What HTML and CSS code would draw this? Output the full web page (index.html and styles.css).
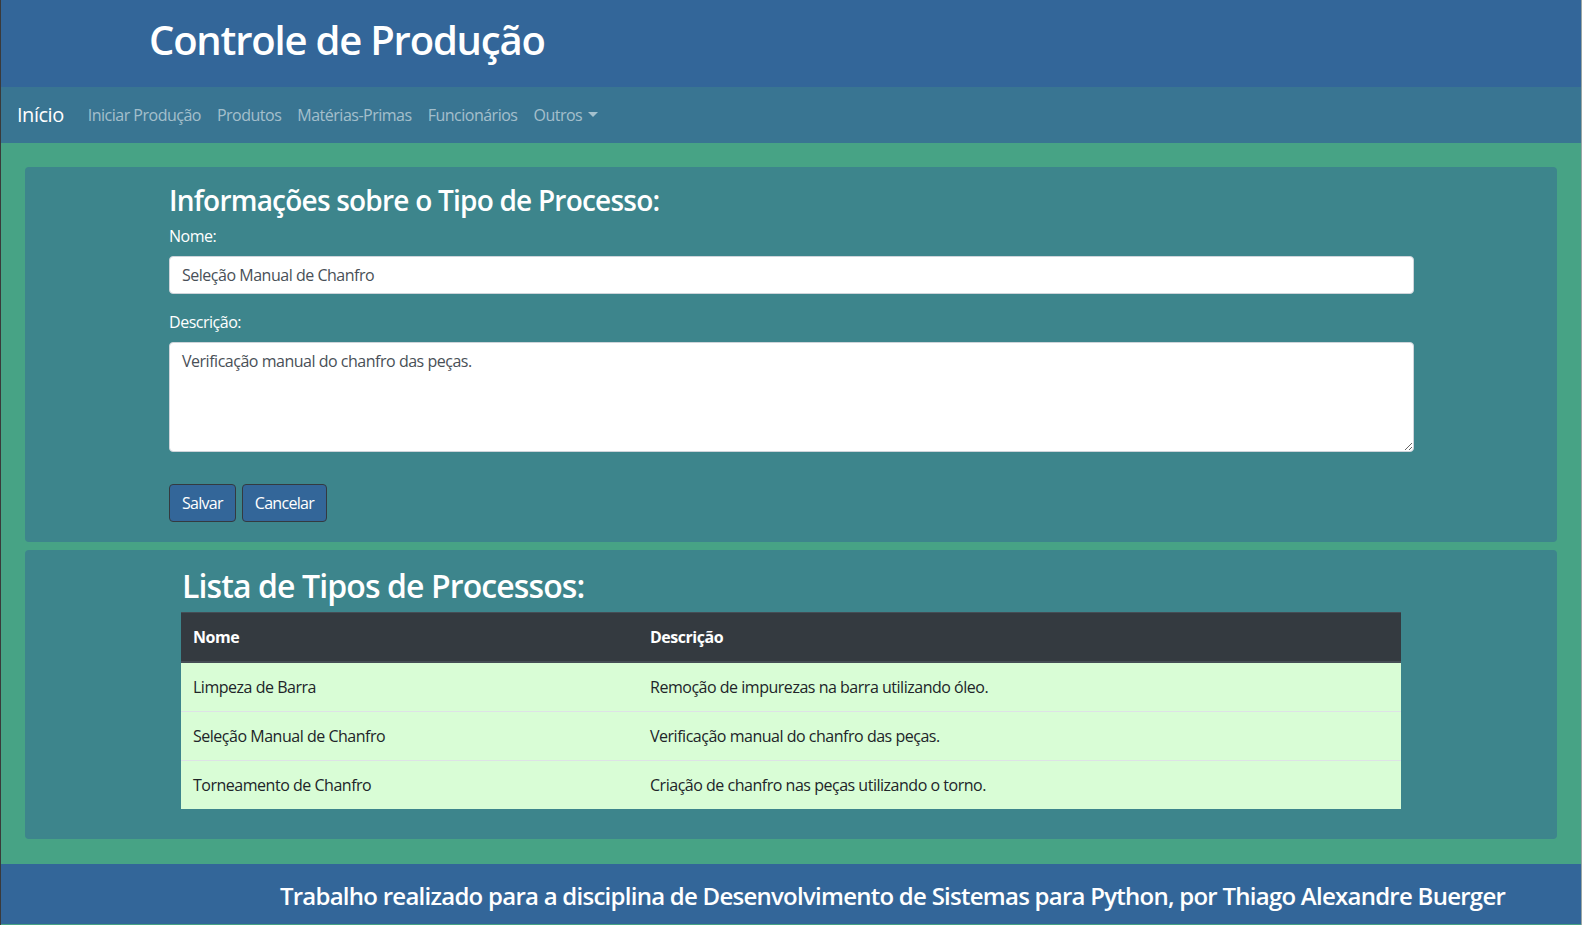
FILE: index.html
```html
<!DOCTYPE html>
<html lang="pt-BR">
<head>
<meta charset="utf-8">
<title>Controle de Produção</title>
<link rel="stylesheet" href="styles.css">
</head>
<body>
<header class="site-header">
  <h1 class="site-title">Controle de Produção</h1>
</header>
<nav class="navbar">
  <a class="brand" href="#">Início</a>
  <ul class="nav-links">
    <li><a href="#">Iniciar Produção</a></li>
    <li><a href="#">Produtos</a></li>
    <li><a href="#">Matérias-Primas</a></li>
    <li><a href="#">Funcionários</a></li>
    <li><a href="#" class="dropdown">Outros<span class="caret"></span></a></li>
  </ul>
</nav>
<main class="content">
  <section class="card card-form">
    <form class="form-col">
      <h3 class="form-title">Informações sobre o Tipo de Processo:</h3>
      <div class="form-group">
        <label for="nome">Nome:</label>
        <input id="nome" class="form-control" type="text" value="Seleção Manual de Chanfro">
      </div>
      <div class="form-group">
        <label for="descricao">Descrição:</label>
        <textarea id="descricao" class="form-control textarea" rows="4">Verificação manual do chanfro das peças.</textarea>
      </div>
      <div class="actions">
        <button type="button" class="btn">Salvar</button>
        <button type="button" class="btn">Cancelar</button>
      </div>
    </form>
  </section>
  <section class="card card-list">
    <div class="list-col">
      <h2 class="list-title">Lista de Tipos de Processos:</h2>
      <table class="table">
        <thead>
          <tr><th class="col-name">Nome</th><th>Descrição</th></tr>
        </thead>
        <tbody>
          <tr><td>Limpeza de Barra</td><td>Remoção de impurezas na barra utilizando óleo.</td></tr>
          <tr><td>Seleção Manual de Chanfro</td><td>Verificação manual do chanfro das peças.</td></tr>
          <tr><td>Torneamento de Chanfro</td><td>Criação de chanfro nas peças utilizando o torno.</td></tr>
        </tbody>
      </table>
    </div>
  </section>
</main>
<footer class="site-footer">
  <h4 class="footer-text">Trabalho realizado para a disciplina de Desenvolvimento de Sistemas para Python, por Thiago Alexandre Buerger</h4>
</footer>
</body>
</html>
```

FILE: styles.css
```css
* { box-sizing: border-box; }

html, body { height: 100%; }

body {
  margin: 0;
  font-family: "Open Sans", "Noto Sans", sans-serif;
  font-size: 16px;
  line-height: 1.5;
  color: #212529;
  background: #47a385;
  border-left: 1px solid #3a3a3a;
  border-right: 1px solid #9aa6a6;
  letter-spacing: -0.03em;
}

.site-header {
  background: #336699;
  height: 87px;
  padding: 16px 0 0 148px;
}

.site-title {
  margin: 0;
  color: #fff;
  font-size: 40px;
  font-weight: 600;
  line-height: 1.2;
  letter-spacing: -0.03em;
}

.navbar {
  background: #397592;
  height: 56px;
  padding: 8px 16px;
  display: flex;
  align-items: center;
}

.brand {
  color: #fff;
  text-decoration: none;
  font-size: 20px;
  line-height: 30px;
  padding: 5px 0;
  margin-right: 16px;
}

.nav-links {
  list-style: none;
  margin: 0;
  padding: 0;
  display: flex;
}

.nav-links a {
  display: block;
  padding: 8px;
  color: rgba(255, 255, 255, 0.55);
  text-decoration: none;
  line-height: 24px;
  letter-spacing: -0.031em;
}

.caret {
  display: inline-block;
  margin-left: 6px;
  vertical-align: 4px;
  border-top: 5px solid rgba(255, 255, 255, 0.55);
  border-left: 5px solid transparent;
  border-right: 5px solid transparent;
}

.content {
  padding: 24px 24px 25px;
  display: flex;
  flex-direction: column;
  gap: 8px;
}

.card {
  background: #3d858c;
  border-radius: 4px;
}

.card-form {
  padding: 15px 143px 20px 144px;
}

.form-title {
  margin: 0 0 6px;
  padding-top: 2px;
  color: #fff;
  font-size: 28px;
  font-weight: 600;
  line-height: 1.2;
  letter-spacing: -0.028em;
}

.form-group {
  margin-bottom: 16px;
}

.form-group label {
  display: block;
  color: #fff;
  margin-bottom: 8px;
}

.form-control {
  display: block;
  width: 100%;
  height: 38px;
  padding: 6px 12px;
  font-family: inherit;
  font-size: 16px;
  line-height: 1.5;
  letter-spacing: inherit;
  color: #495057;
  background: #fff;
  border: 1px solid #ced4da;
  border-radius: 4px;
}

.textarea {
  height: 110px;
  resize: vertical;
}

.actions {
  padding-top: 16px;
  display: flex;
  gap: 6px;
}

.btn {
  height: 38px;
  padding: 6px 12px;
  font-family: inherit;
  font-size: 16px;
  line-height: 1.5;
  letter-spacing: -0.045em;
  color: #fff;
  background: #336699;
  border: 1px solid #343a40;
  border-radius: 4px;
}

.card-list {
  padding: 16px 0 30px;
}

.list-col {
  width: 1220px;
  margin: 0 auto;
}

.list-title {
  margin: 0 0 7px 1px;
  padding-top: 1px;
  color: #fff;
  font-size: 32px;
  font-weight: 600;
  line-height: 1.2;
  letter-spacing: -0.028em;
}

.table {
  width: 100%;
  border-collapse: collapse;
}

.table th {
  background: #343a40;
  color: #fff;
  font-weight: 700;
  text-align: left;
  padding: 12px;
  border-top: 1px solid #454d55;
  border-bottom: 2px solid #454d55;
}

.col-name { width: 457px; }

.table td {
  background: #d9fdd6;
  padding: 12px;
  border-top: 1px solid #dee2e6;
  color: #212529;
}

.site-footer {
  background: #336699;
  padding: 18px 0 13px 203px;
  text-align: center;
}

.footer-text {
  margin: 0;
  color: #fff;
  font-size: 24px;
  font-weight: 600;
  line-height: 1.2;
  letter-spacing: -0.031em;
}
```
